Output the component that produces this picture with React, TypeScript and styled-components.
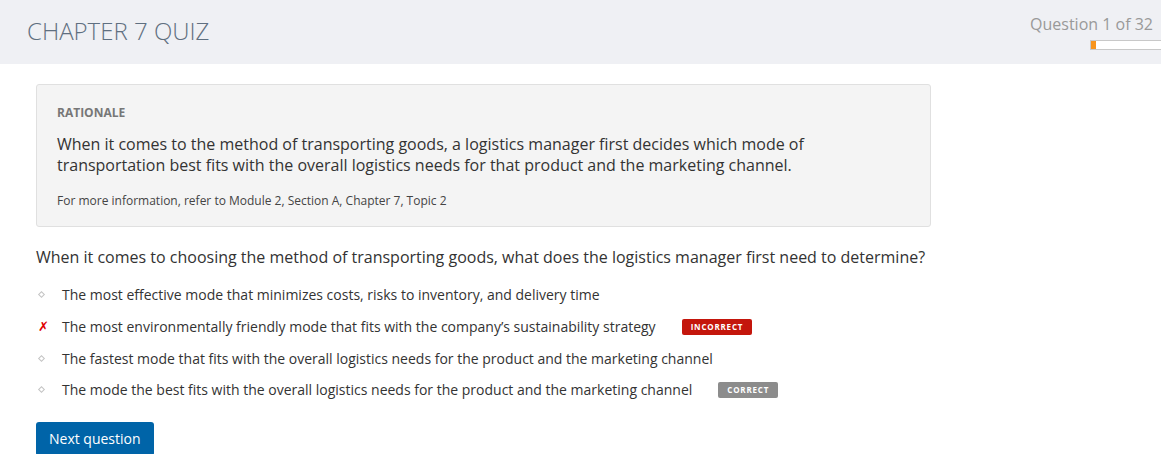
import React from 'react';
import styled, { createGlobalStyle } from 'styled-components';

const GlobalStyle = createGlobalStyle`
    body {
        margin: 0;
        background: #ffffff;
        font-family: "Open Sans", "Liberation Sans", sans-serif;
        color: #333;
    }
`;

const Header = styled.header`
    height: 64px;
    background-color: #eff0f4;
    display: flex;
    justify-content: space-between;
    align-items: flex-start;
    padding: 0 0 0 27px;
    overflow: hidden;
`;

const Title = styled.h1`
    margin: 15px 0 0;
    font-size: 24px;
    font-weight: 300;
    line-height: 32px;
    color: #5f6f80;
`;

const Progress = styled.div`
    display: flex;
    flex-direction: column;
    align-items: flex-end;
    padding-top: 13px;
`;

const ProgressLabel = styled.div`
    font-size: 16px;
    line-height: 22px;
    color: #999;
    padding-right: 8px;
`;

const ProgressTrack = styled.div`
    margin-top: 5px;
    width: 70px;
    height: 8px;
    background: #fff;
    border: 1px solid #c8c8c8;
    border-right: none;
    display: flex;
`;

const ProgressFill = styled.div`
    background: #f7941d;
    height: 100%;
`;

const Main = styled.main`
    width: 895px;
    padding: 20px 0 0 36px;
`;

const Rationale = styled.section`
    background: #f4f4f4;
    border: 1px solid #e0e0e0;
    border-radius: 3px;
    padding: 19px 20px 16px;
`;

const RationaleHeading = styled.h3`
    margin: 0;
    font-size: 12px;
    font-weight: 700;
    line-height: 18px;
    color: #777;
`;

const RationaleText = styled.p`
    margin: 12px 0 0;
    font-size: 16px;
    line-height: 21px;
    color: #333;
`;

const RationaleRef = styled.p`
    margin: 16px 0 0;
    font-size: 12px;
    line-height: 18px;
    color: #444;
`;

const Question = styled.p`
    margin: 18px 0 0;
    font-size: 16px;
    line-height: 24px;
    color: #333;
`;

const Options = styled.ul`
    list-style: none;
    margin: 10px 0 0;
    padding: 0;
`;

const Option = styled.li`
    display: flex;
    align-items: center;
    height: 31.7px;
    font-size: 14px;
    color: #333;
`;

const Marker = styled.span`
    width: 26px;
    display: flex;
    align-items: center;
    padding-left: 2px;
    box-sizing: border-box;
`;

const Diamond = styled.span`
    width: 3px;
    height: 3px;
    border: 1px solid #c4c4c4;
    transform: rotate(45deg);
    margin-left: 1px;
`;

const Cross = styled.span`
    color: #e00000;
    font-family: "DejaVu Sans", sans-serif;
    font-size: 13px;
    font-weight: 700;
    font-style: italic;
`;

const Badge = styled.span<{ tone: 'wrong' | 'right' }>`
    margin-left: 26px;
    padding: 0 9px;
    height: 16px;
    line-height: 16px;
    font-size: 8px;
    font-weight: 700;
    letter-spacing: 0.8px;
    color: #fff;
    border-radius: 2px;
    background: ${(p) => (p.tone === 'wrong' ? '#c4160c' : '#8c8c8c')};
`;

const NextButton = styled.button`
    margin-top: 16px;
    background: #0064a8;
    color: #fff;
    border: none;
    border-radius: 3px;
    font-family: "Open Sans", "Liberation Sans", sans-serif;
    font-size: 14px;
    padding: 0 13px;
    height: 34px;
    cursor: pointer;
`;

const options = [
    { text: 'The most effective mode that minimizes costs, risks to inventory, and delivery time' },
    { text: 'The most environmentally friendly mode that fits with the company\u2019s sustainability strategy', wrong: true },
    { text: 'The fastest mode that fits with the overall logistics needs for the product and the marketing channel' },
    { text: 'The mode the best fits with the overall logistics needs for the product and the marketing channel', right: true },
];

export default function App() {
    const current = 1;
    const total = 32;
    return (
        <>
            <GlobalStyle />
            <Header>
                <Title>CHAPTER 7 QUIZ</Title>
                <Progress>
                    <ProgressLabel>Question {current} of {total}</ProgressLabel>
                    <ProgressTrack>
                        <ProgressFill style={{ width: 5 }} />
                    </ProgressTrack>
                </Progress>
            </Header>
            <Main>
                <Rationale>
                    <RationaleHeading>RATIONALE</RationaleHeading>
                    <RationaleText>
                        When it comes to the method of transporting goods, a logistics manager first decides which mode of
                        <br />
                        transportation best fits with the overall logistics needs for that product and the marketing channel.
                    </RationaleText>
                    <RationaleRef>For more information, refer to Module 2, Section A, Chapter 7, Topic 2</RationaleRef>
                </Rationale>
                <Question>
                    When it comes to choosing the method of transporting goods, what does the logistics manager first need to determine?
                </Question>
                <Options>
                    {options.map((o) => (
                        <Option key={o.text}>
                            <Marker>{o.wrong ? <Cross>✗</Cross> : <Diamond />}</Marker>
                            {o.text}
                            {o.wrong && <Badge tone="wrong">INCORRECT</Badge>}
                            {o.right && <Badge tone="right">CORRECT</Badge>}
                        </Option>
                    ))}
                </Options>
                <NextButton>Next question</NextButton>
            </Main>
        </>
    );
}
